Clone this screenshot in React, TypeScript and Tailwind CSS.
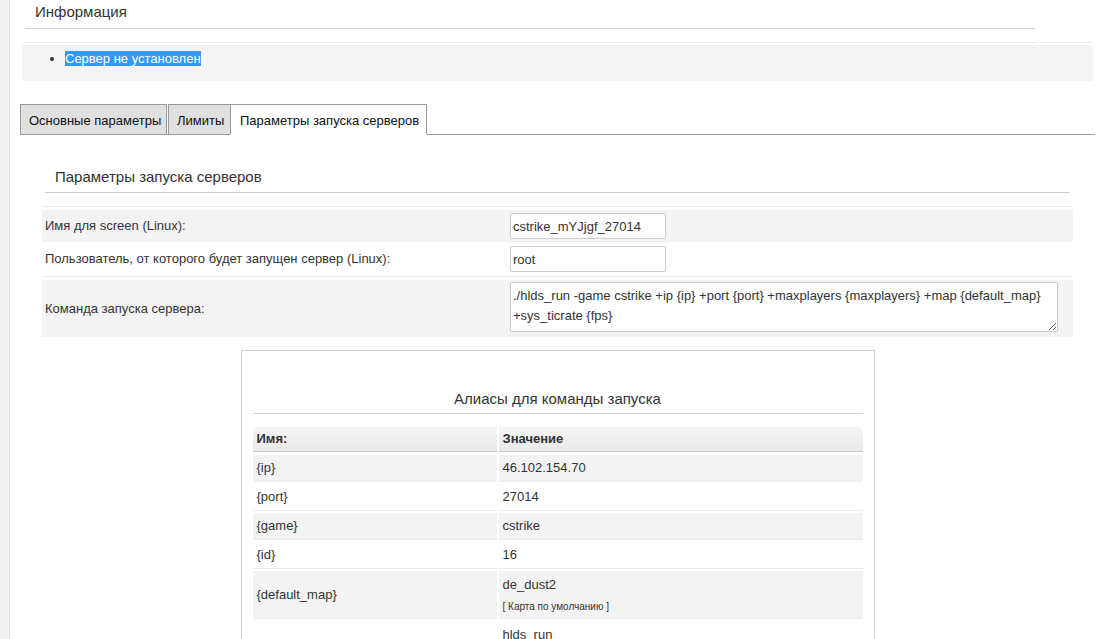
import React from "react";

const aliases = [
  { name: "{ip}", value: "46.102.154.70" },
  { name: "{port}", value: "27014" },
  { name: "{game}", value: "cstrike" },
  { name: "{id}", value: "16" },
  { name: "{default_map}", value: "de_dust2", note: ["[ Карта по умолчанию ]"] },
  { name: "{hlds}", value: "hlds_run", note: ["[ Исполняемый файл ]", "[ Linux ]"] },
  { name: "{maxplayers}", value: "32" },
  { name: "{fps}", value: "1000" },
];

const AliasCell = ({ index, center, children }: { index: number; center?: boolean; children: React.ReactNode }) => {
  const gray = index % 2 === 0;
  return (
    <div className={`flex flex-col ${index === 0 ? "pt-[3px]" : "border-t border-[#ebebeb] pt-[2px]"}`}>
      <div
        className={`flex-1 min-h-[26px] px-[4px] flex flex-col ${center ? "justify-center" : ""} ${gray ? "bg-[#f3f3f3]" : "bg-white"}`}
      >
        {children}
      </div>
    </div>
  );
};

const App = () => {
  return (
    <div className="flex min-h-screen bg-white font-['Liberation_Sans',Arial,sans-serif] text-[13px] text-[#333]">
      {/* left strip */}
      <div className="w-[10px] shrink-0 bg-[#f1f1f1] border-r border-[#dedede]" />

      <div className="flex-1">
        {/* Информация */}
        <div className="ml-[15px] w-[1010px] pl-[10px] pt-[2px] pb-[6px] border-b border-[#cfcfcf] text-[15px] leading-[20px]">
          Информация
        </div>

        <div className="ml-[12px] mt-[13px] flex gap-[2px]">
          <div className="w-[1016px] border-t border-[#ececec]" />
          <div className="w-[53px] border-t border-[#ececec]" />
        </div>
        <div className="ml-[12px] mt-[2px] w-[1071px] h-[36px] bg-[#f4f4f4] pt-[5px]">
          <ul className="list-disc pl-[43px] leading-[17px]">
            <li>
              <span className="bg-[#3399ff] text-white">Сервер не установлен</span>
            </li>
          </ul>
        </div>

        {/* Tabs */}
        <div className="ml-[10px] mt-[23px] w-[1075px] flex items-start border-b border-[#9a9a9a] text-[#111]">
          <div className="w-[147px] h-[30px] border-t border-x border-[#9a9a9a] bg-[#e0e0e0] pl-[8px] pt-[6px] leading-[20px]">
            Основные параметры
          </div>
          <div className="ml-[1px] w-[63px] h-[30px] border-t border-x border-[#9a9a9a] bg-[#e0e0e0] pl-[8px] pt-[6px] leading-[20px]">
            Лимиты
          </div>
          <div className="relative -ml-px w-[197px] h-[31px] -mb-px border border-[#9a9a9a] border-b-white bg-white pl-[9px] pt-[6px] leading-[20px]">
            Параметры запуска серверов
          </div>
        </div>

        {/* Section header */}
        <div className="ml-[35px] mt-[32px] w-[1025px] pl-[10px] pb-[5px] border-b border-[#cfcfcf] text-[15px] leading-[20px]">
          Параметры запуска серверов
        </div>

        {/* Form */}
        <div className="ml-[32px] mt-[13px] w-[1031px]">
          <div className="border-t border-[#ececec]" />
          <div className="mt-[3px] grid grid-cols-[462px_1fr] gap-x-[2px] h-[32px] bg-[#f3f3f3]">
            <div className="flex items-center pl-[3px]">Имя для screen (Linux):</div>
            <div className="flex items-center pl-[4px] bg-[#f3f3f3]">
              <input
                readOnly
                defaultValue="cstrike_mYJjgf_27014"
                className="w-[156px] h-[26px] border border-[#cccccc] rounded-[2px] px-[2px] text-[13px] text-[#333] bg-white outline-none"
              />
            </div>
          </div>
          <div className="grid grid-cols-[462px_1fr] gap-x-[2px] h-[34px]">
            <div className="flex items-center pl-[3px]">Пользователь, от которого будет запущен сервер (Linux):</div>
            <div className="flex items-center pl-[4px]">
              <input
                readOnly
                defaultValue="root"
                className="w-[156px] h-[26px] border border-[#cccccc] rounded-[2px] px-[2px] text-[13px] text-[#333] bg-white outline-none"
              />
            </div>
          </div>
          <div className="border-t border-[#ececec]" />
          <div className="mt-[3px] grid grid-cols-[462px_1fr] gap-x-[2px] h-[57px] bg-[#f3f3f3]">
            <div className="flex items-center pl-[3px]">Команда запуска сервера:</div>
            <div className="pl-[4px] pt-[2px] bg-[#f3f3f3]">
              <textarea
                readOnly
                defaultValue="./hlds_run -game cstrike +ip {ip} +port {port} +maxplayers {maxplayers} +map {default_map} +sys_ticrate {fps}"
                className="block w-[548px] h-[50px] border border-[#cccccc] rounded-[2px] px-[2px] pt-[3px] text-[13px] leading-[20px] text-[#333] bg-white outline-none overflow-hidden"
              />
            </div>
          </div>

          {/* Aliases */}
          <div className="mx-auto mt-[13px] w-[634px] border border-[#d0d0d0] px-[11px] pt-[38px] pb-[20px]">
            <div className="text-center text-[15px] leading-[20px] pb-[4px] border-b border-[#cfcfcf]">
              Алиасы для команды запуска
            </div>
            <div className="mt-[13px] grid grid-cols-[244px_1fr] gap-x-[2px]">
              <div className="h-[25px] flex items-center px-[4px] font-bold border-b border-[#cacaca] rounded-tl-[2px] bg-gradient-to-b from-[#f6f6f6] to-[#e9e9e9]">
                Имя:
              </div>
              <div className="h-[25px] flex items-center px-[4px] font-bold border-b border-[#cacaca] rounded-tr-[6px] bg-gradient-to-b from-[#f6f6f6] to-[#e9e9e9]">
                Значение
              </div>
              {aliases.map((a, i) => (
                <React.Fragment key={a.name}>
                  <AliasCell index={i} center>
                    <span>{a.name}</span>
                  </AliasCell>
                  {a.note ? (
                    <AliasCell index={i}>
                      <div className="pt-[6px] pb-[4px]">
                        <div className="leading-[16px]">{a.value}</div>
                        {a.note.map((n, k) => (
                          <div key={k} className="mt-[7px] text-[10px] leading-[14px]">
                            {n}
                          </div>
                        ))}
                      </div>
                    </AliasCell>
                  ) : (
                    <AliasCell index={i} center>
                      <span>{a.value}</span>
                    </AliasCell>
                  )}
                </React.Fragment>
              ))}
            </div>
          </div>
        </div>
      </div>
    </div>
  );
};

export default App;
